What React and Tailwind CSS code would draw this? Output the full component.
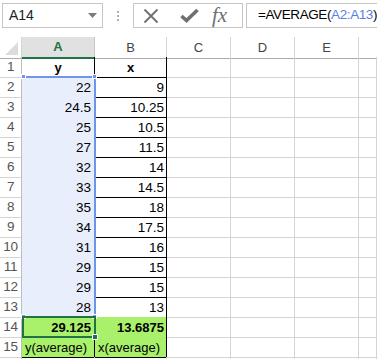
import React from 'react';

const ys = ['22', '24.5', '25', '27', '32', '33', '35', '34', '31', '29', '29', '28'];
const xs = ['9', '10.25', '10.5', '11.5', '14', '14.5', '18', '17.5', '16', '15', '15', '13'];

const cols = 'grid grid-cols-[22px_73px_72px_64px_64px_64px_1fr] h-[20px]';

const RowHead = ({ n }) => (
    <div className="flex items-center justify-center border-r border-b border-r-[#bdbdbd] border-b-[#d4d4d4] text-[13.5px] tracking-[-0.3px] text-[#555]">
        {n}
    </div>
);

const Empty = () => <div className="border-r border-b border-[#d4d4d4]" />;

const Toolbar = () => (
    <div className="flex h-[37px] items-start pl-[2px] pt-[3px]">
        {/* Name box */}
        <div className="flex h-[25px] w-[101px] shrink-0 items-center justify-between border border-[#c6c6c6] pl-[6px] pr-[5px] text-[14px] text-[#222]">
            <span>A14</span>
            <svg width="9" height="5" viewBox="0 0 9 5">
                <polygon points="0,0 9,0 4.5,5" fill="#7a7a7a" />
            </svg>
        </div>

        {/* Splitter dots */}
        <div className="flex h-[25px] w-[30px] shrink-0 flex-col items-center justify-center gap-[2px]">
            <span className="h-[2px] w-[2px] bg-[#b0b0b0]" />
            <span className="h-[2px] w-[2px] bg-[#b0b0b0]" />
            <span className="h-[2px] w-[2px] bg-[#b0b0b0]" />
        </div>

        {/* Cancel / Enter / Insert function */}
        <div className="flex h-[25px] w-[110px] shrink-0 items-center border border-[#c6c6c6]">
            <svg className="ml-[9px]" width="16" height="16" viewBox="0 0 16 16">
                <path d="M1.5 1.5 L14.5 14.5 M14.5 1.5 L1.5 14.5" stroke="#6f6f6f" strokeWidth="1.8" fill="none" />
            </svg>
            <svg className="ml-[21px]" width="19" height="15" viewBox="0 0 19 15">
                <path d="M1.5 8 L6.5 12.5 L17.5 2" stroke="#6f6f6f" strokeWidth="3.6" fill="none" />
            </svg>
            <span className="ml-[13px] font-['Liberation_Serif',serif] text-[21px] italic leading-none text-[#6f6f6f]">
                fx
            </span>
        </div>

        {/* Formula bar */}
        <div className="ml-[3px] flex h-[25px] min-w-0 flex-1 items-center overflow-hidden whitespace-nowrap border border-r-0 border-[#c6c6c6] pl-[11px] text-[13.5px] tracking-[-0.4px] text-black">
            <span>=AVERAGE(</span>
            <span className="text-[#5b7fe0]">A2:A13</span>
            <span>)</span>
        </div>
    </div>
);

const HeaderRow = () => (
    <div className={cols}>
        <div className="flex items-end justify-end border-r border-b border-r-[#d4d4d4] border-b-[#ababab] pb-[3px] pr-[3px]">
            <svg width="13" height="13" viewBox="0 0 13 13">
                <polygon points="13,0 13,13 0,13" fill="#dcdcdc" />
            </svg>
        </div>
        <div className="flex items-center justify-center border-r border-b-2 border-r-[#c6c6c6] border-b-[#217346] bg-[#e1e1e1] text-[13px] font-bold text-[#217346]">
            A
        </div>
        <div className="flex items-center justify-center border-r border-b border-r-[#d4d4d4] border-b-[#ababab] text-[13px] text-[#444]">
            B
        </div>
        <div className="flex items-center justify-center border-r border-b border-r-[#d4d4d4] border-b-[#ababab] text-[13px] text-[#444]">
            C
        </div>
        <div className="flex items-center justify-center border-r border-b border-r-[#d4d4d4] border-b-[#ababab] text-[13px] text-[#444]">
            D
        </div>
        <div className="flex items-center justify-center border-r border-b border-r-[#d4d4d4] border-b-[#ababab] text-[13px] text-[#444]">
            E
        </div>
        <div className="border-b border-b-[#ababab]" />
    </div>
);

export default function App() {
    return (
        <div className="relative h-[359px] w-[377px] overflow-hidden bg-white font-['Liberation_Sans',Arial,sans-serif]">
            <Toolbar />
            <HeaderRow />

            {/* Row 1: labels */}
            <div className={cols}>
                <RowHead n={1} />
                <div className="flex items-end justify-center border-r border-b border-black pb-[1px] text-[13px] font-bold leading-[16px]">y</div>
                <div className="flex items-end justify-center border-r border-b border-black pb-[1px] text-[13px] font-bold leading-[16px]">x</div>
                <Empty />
                <Empty />
                <Empty />
                <Empty />
            </div>

            {/* Rows 2-13: data */}
            {ys.map((y, i) => (
                <div key={i} className={cols}>
                    <RowHead n={i + 2} />
                    <div className="flex items-end justify-end border-r border-b border-black bg-[#e8eefb] pb-[1px] pr-[3px] text-[13.5px] leading-[16px]">
                        {y}
                    </div>
                    <div className="flex items-end justify-end border-r border-b border-black pb-[1px] pr-[2px] text-[13.5px] leading-[16px]">
                        {xs[i]}
                    </div>
                    <Empty />
                    <Empty />
                    <Empty />
                    <Empty />
                </div>
            ))}

            {/* Row 14: averages */}
            <div className={cols}>
                <RowHead n={14} />
                <div className="flex items-end justify-end border-r border-b border-black bg-[#a9f06b] pb-[1px] pr-[3px] text-[13px] font-bold leading-[16px]">
                    29.125
                </div>
                <div className="flex items-end justify-end border-r border-b border-black bg-[#a9f06b] pb-[1px] pr-[2px] text-[13px] font-bold leading-[16px]">
                    13.6875
                </div>
                <Empty />
                <Empty />
                <Empty />
                <Empty />
            </div>

            {/* Row 15: captions */}
            <div className={cols}>
                <RowHead n={15} />
                <div className="flex items-end border-r border-b border-black bg-[#a9f06b] pb-[1px] pl-[3px] text-[13px] leading-[16px]">
                    y(average)
                </div>
                <div className="flex items-end border-r border-b border-black bg-[#a9f06b] pb-[1px] pl-[3px] text-[13px] leading-[16px]">
                    x(average)
                </div>
                <Empty />
                <Empty />
                <Empty />
                <Empty />
            </div>

            {/* Top sliver of the next row */}
            <div className={cols}>
                <div className="border-r border-r-[#bdbdbd]" />
                <Empty />
                <Empty />
                <Empty />
                <Empty />
                <Empty />
                <Empty />
            </div>

            {/* Formula reference range A2:A13 */}
            <div className="pointer-events-none absolute left-[22px] top-[76px] h-[241px] w-[74px] border-t-2 border-r-2 border-[#6f95e8]" />
            <span className="absolute left-[21px] top-[74px] h-[5px] w-[5px] border border-white bg-[#6f95e8]" />
            <span className="absolute left-[92px] top-[74px] h-[5px] w-[5px] border border-white bg-[#6f95e8]" />
            <span className="absolute left-[21px] top-[314px] h-[5px] w-[5px] border border-white bg-[#6f95e8]" />
            <span className="absolute left-[92px] top-[314px] h-[5px] w-[5px] border border-white bg-[#6f95e8]" />

            {/* Active cell A14 */}
            <div className="pointer-events-none absolute left-[22px] top-[316px] h-[22px] w-[74px] border-2 border-[#217346]" />
            <span className="absolute left-[92px] top-[334px] h-[6px] w-[6px] border border-white bg-[#217346]" />
        </div>
    );
}
